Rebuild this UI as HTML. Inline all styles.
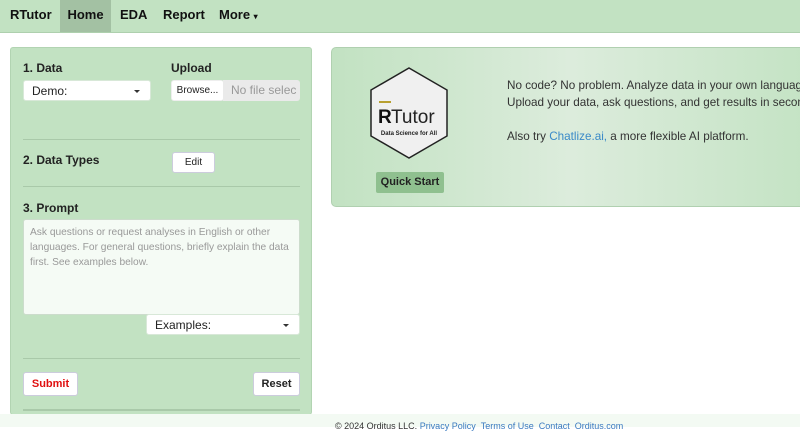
<!DOCTYPE html>
<html><head><style>
*{box-sizing:border-box;margin:0;padding:0}
body{width:800px;height:427px;overflow:hidden;background:#fff;font-family:"Liberation Sans",Arial,sans-serif;font-size:12px;color:#222;position:relative}
.nav{position:absolute;left:0;top:0;width:800px;height:33px;background:#c2e2c2;border-bottom:1px solid #aed0ae}
.nav span{position:absolute;top:0;height:32px;line-height:30px;font-weight:bold;font-size:13px;color:#111}
.panel{position:absolute;left:10px;top:47px;width:302px;height:368px;background:#c2e2c2;border:1px solid #b2d4b2;border-radius:3px}
.a{position:absolute}
.lbl{font-weight:bold;font-size:12px}
.sel{background:#fff;border-radius:3px;border:1px solid #d8e8d8;height:21px;line-height:20px;padding-left:8px;font-size:12px}
.tri{position:absolute;right:10px;top:9px;border-left:3px solid transparent;border-right:3px solid transparent;border-top:3px solid #333}
.hr{position:absolute;left:12px;width:277px;height:1px;background:#a9c9a9}
.btn{background:#fff;border:1px solid #ccd;border-radius:3px;text-align:center;font-size:11px}
.jumbo{position:absolute;left:331px;top:47px;width:480px;height:160px;border-radius:5px;border:1px solid #b0d0b0;background:linear-gradient(90deg,#c2e2c2 0%,#dcecdc 50%,#c4e3c4 100%)}
.foot{position:absolute;left:0;top:414px;width:800px;height:13px;background:#f3faf3;font-size:9px;color:#333}
</style></head><body>
<div class="nav">
<span style="left:10px">RTutor</span>
<span style="left:60px;width:51px;background:#a3c1a3;text-align:center">Home</span>
<span style="left:120px">EDA</span>
<span style="left:163px">Report</span>
<span style="left:219px">More <span style="position:static;font-size:8px">▾</span></span>
</div>
<div class="panel">
<div class="a lbl" style="left:12px;top:13px">1. Data</div>
<div class="a lbl" style="left:160px;top:13px">Upload</div>
<div class="a sel" style="left:12px;top:32px;width:128px">Demo:<div class="tri"></div></div>
<div class="a btn" style="left:160px;top:32px;width:53px;height:21px;line-height:20px;font-size:10px;border-color:#eee">Browse...</div>
<div class="a" style="left:212px;top:32px;width:77px;height:21px;line-height:20px;background:#eaeaea;color:#999;font-size:12px;padding-left:8px;border-radius:0 3px 3px 0;overflow:hidden;white-space:nowrap">No file selec</div>
<div class="hr" style="top:91px"></div>
<div class="a lbl" style="left:12px;top:105px">2. Data Types</div>
<div class="a btn" style="left:161px;top:104px;width:43px;height:21px;line-height:20px;font-size:10px">Edit</div>
<div class="hr" style="top:138px"></div>
<div class="a lbl" style="left:12px;top:153px">3. Prompt</div>
<div class="a" style="left:12px;top:171px;width:277px;height:96px;background:#f5fbf5;border:1px solid #ccdccc;border-radius:3px;padding:5px 6px;color:#999;font-size:10.2px;line-height:15px">Ask questions or request analyses in English or other languages. For general questions, briefly explain the data first. See examples below.</div>
<div class="a sel" style="left:135px;top:266px;width:154px;height:21px;">Examples:<div class="tri"></div></div>
<div class="hr" style="top:310px"></div>
<div class="a btn" style="left:12px;top:324px;width:55px;height:24px;line-height:23px;color:#e01010;font-weight:bold;font-size:11px">Submit</div>
<div class="a btn" style="left:242px;top:324px;width:47px;height:24px;line-height:23px;font-weight:bold;font-size:11px">Reset</div>
<div class="hr" style="top:361px;height:2px"></div>
</div>
<div class="jumbo">
<svg class="a" style="left:37px;top:19px" width="80" height="92" viewBox="0 0 80 92"><polygon points="40,1 78,23 78,69 40,91 2,69 2,23" fill="#f0f0f0" stroke="#222" stroke-width="1.5"/>
<rect x="10" y="34" width="12" height="2" fill="#b8a030"/>
<text x="9" y="56" font-family="Liberation Sans" font-size="19" font-weight="bold" fill="#111">R</text>
<text x="22" y="56" font-family="Liberation Sans" font-size="19" fill="#222">Tutor</text>
<text x="40" y="68" text-anchor="middle" font-family="Liberation Sans" font-size="6" font-weight="bold" fill="#222">Data Science for All</text></svg>
<div class="a" style="left:44px;top:124px;width:68px;height:21px;line-height:21px;background:#8fc08f;border-radius:2px;text-align:center;font-weight:bold;font-size:11px">Quick Start</div>
<div class="a" style="left:175px;top:29px;font-size:11.7px;line-height:17px;color:#333;white-space:nowrap">No code? No problem. Analyze data in your own language.<br>Upload your data, ask questions, and get results in seconds.<br><br style="line-height:8px">Also try <span style="color:#3a8ac8">Chatlize.ai,</span> a more flexible AI platform.</div>
</div>
<div class="foot"><div class="a" style="left:335px;top:7px;white-space:nowrap">© 2024 Orditus LLC. <span style="color:#3a7ac0">Privacy Policy</span> &nbsp;<span style="color:#3a7ac0">Terms of Use</span> &nbsp;<span style="color:#3a7ac0">Contact</span> &nbsp;<span style="color:#3a7ac0">Orditus.com</span></div></div>
</body></html>
